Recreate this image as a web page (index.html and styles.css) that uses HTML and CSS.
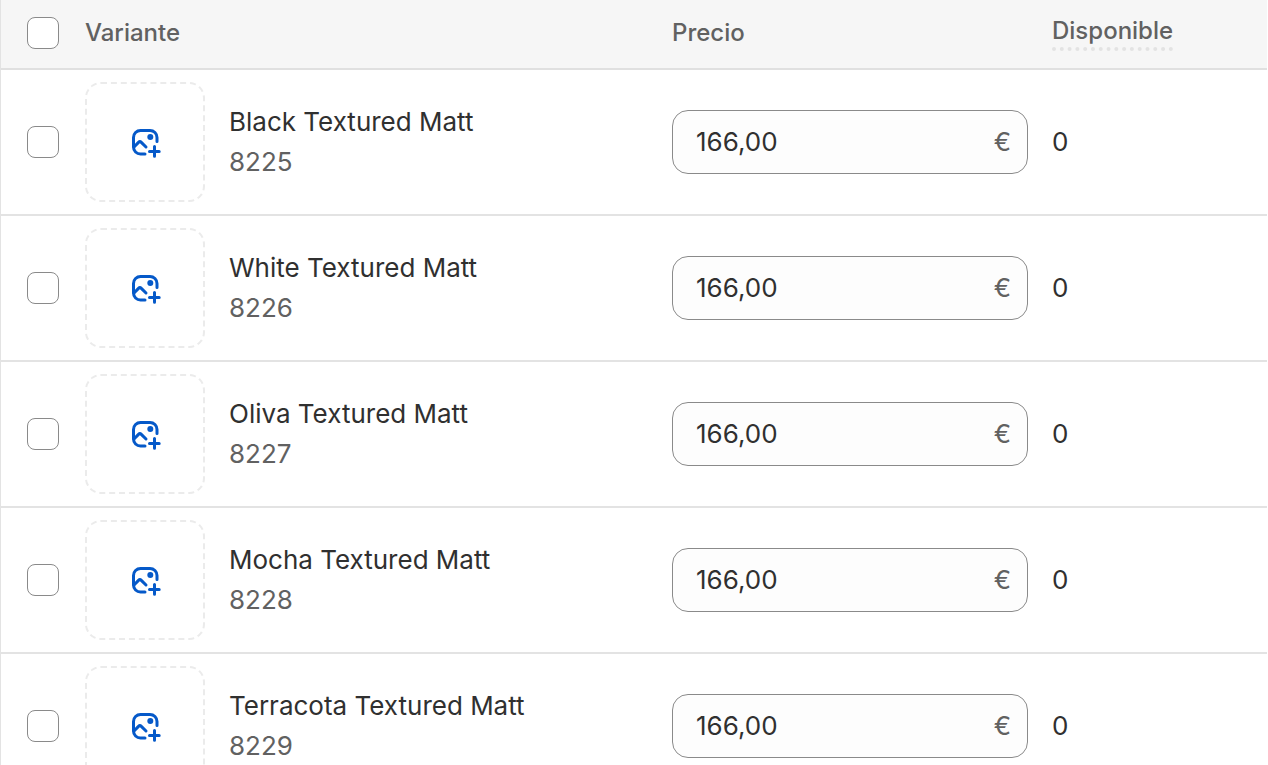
FILE: index.html
```
<!DOCTYPE html>
<html lang="es">
<head>
<meta charset="utf-8">
<title>Variantes</title>
<link rel="stylesheet" href="styles.css">
</head>
<body>
<svg class="sprite" aria-hidden="true">
  <symbol id="image-add" viewBox="-2 -2 32 32">
    <g fill="none" stroke="currentColor" stroke-width="3" stroke-linecap="round" stroke-linejoin="round">
      <path d="M26 13.500V9.500a7 7 0 0 0-7-7H9.500a7 7 0 0 0-7 7V19a7 7 0 0 0 7 7H14"/>
      <path d="M3 19L7.500 14.400Q8.900 13 10.300 14.400L15 19"/>
      <path d="M23.500 18.500V28.200M18.500 23.500H28.200"/>
    </g>
    <circle cx="19.300" cy="9" r="3" fill="currentColor"/>
  </symbol>
</svg>
<main class="panel">
  <table class="variants">
    <colgroup>
      <col class="col-select"><col class="col-variant"><col class="col-price"><col class="col-stock">
    </colgroup>
    <thead>
      <tr>
        <th><input class="check" type="checkbox" aria-label="Seleccionar todo"></th>
        <th scope="col">Variante</th>
        <th scope="col">Precio</th>
        <th scope="col"><span class="hint">Disponible</span></th>
      </tr>
    </thead>
    <tbody>
      <tr>
        <td><input class="check" type="checkbox" aria-labelledby="v1"></td>
        <td><div class="variant"><button class="thumb" type="button" aria-label="Añadir imagen"><svg class="icon"><use href="#image-add"/></svg></button><div><div class="name" id="v1">Black Textured Matt</div><div class="sku">8225</div></div></div></td>
        <td><label class="price"><input class="amount" type="text" value="166,00" aria-label="Precio"><span>€</span></label></td>
        <td>0</td>
      </tr>
      <tr>
        <td><input class="check" type="checkbox" aria-labelledby="v2"></td>
        <td><div class="variant"><button class="thumb" type="button" aria-label="Añadir imagen"><svg class="icon"><use href="#image-add"/></svg></button><div><div class="name" id="v2">White Textured Matt</div><div class="sku">8226</div></div></div></td>
        <td><label class="price"><input class="amount" type="text" value="166,00" aria-label="Precio"><span>€</span></label></td>
        <td>0</td>
      </tr>
      <tr>
        <td><input class="check" type="checkbox" aria-labelledby="v3"></td>
        <td><div class="variant"><button class="thumb" type="button" aria-label="Añadir imagen"><svg class="icon"><use href="#image-add"/></svg></button><div><div class="name" id="v3">Oliva Textured Matt</div><div class="sku">8227</div></div></div></td>
        <td><label class="price"><input class="amount" type="text" value="166,00" aria-label="Precio"><span>€</span></label></td>
        <td>0</td>
      </tr>
      <tr>
        <td><input class="check" type="checkbox" aria-labelledby="v4"></td>
        <td><div class="variant"><button class="thumb" type="button" aria-label="Añadir imagen"><svg class="icon"><use href="#image-add"/></svg></button><div><div class="name" id="v4">Mocha Textured Matt</div><div class="sku">8228</div></div></div></td>
        <td><label class="price"><input class="amount" type="text" value="166,00" aria-label="Precio"><span>€</span></label></td>
        <td>0</td>
      </tr>
      <tr>
        <td><input class="check" type="checkbox" aria-labelledby="v5"></td>
        <td><div class="variant"><button class="thumb" type="button" aria-label="Añadir imagen"><svg class="icon"><use href="#image-add"/></svg></button><div><div class="name" id="v5">Terracota Textured Matt</div><div class="sku">8229</div></div></div></td>
        <td><label class="price"><input class="amount" type="text" value="166,00" aria-label="Precio"><span>€</span></label></td>
        <td>0</td>
      </tr>
    </tbody>
  </table>
</main>
</body>
</html>
```
FILE: styles.css
```
* {
  box-sizing: border-box;
}

body {
  margin: 0;
  background: #fff;
  color: #303030;
  font-family: Inter, "Liberation Sans", sans-serif;
  font-size: 26px;
  line-height: 40px;
}

.sprite {
  display: none;
}

.panel {
  height: 100vh;
  overflow: hidden;
  padding-right: 1px;
  border-left: 1px solid #e3e3e3;
}

.variants {
  width: 100%;
  table-layout: fixed;
  border-collapse: separate;
  border-spacing: 0;
}

.col-select {
  width: 84px;
}

.col-price {
  width: 380px;
}

.col-stock {
  width: 215px;
}

.variants th {
  height: 70px;
  padding: 0 0 2px;
  border-bottom: 2px solid #e0e0e0;
  background: #f6f6f6;
  color: #616161;
  font-size: 24px;
  font-weight: 500;
  line-height: 32px;
  text-align: left;
  vertical-align: middle;
}

.variants td {
  padding: 12px 0;
  border-bottom: 2px solid #e3e3e3;
  vertical-align: middle;
}

.check {
  display: block;
  appearance: none;
  width: 32px;
  height: 32px;
  margin: 0 0 0 26px;
  border: 1px solid #8a8a8a;
  border-radius: 8px;
  background: #fff;
}

.check:checked {
  background: #303030;
}

.hint {
  display: inline-block;
  border-bottom: 4px dotted #e3e3e3;
}

.variant {
  display: flex;
  align-items: center;
  gap: 24px;
}

.thumb {
  display: flex;
  flex: none;
  align-items: center;
  justify-content: center;
  width: 120px;
  height: 120px;
  padding: 0;
  border: 2px dashed #ebebeb;
  border-radius: 16px;
  background: #fff;
  color: #0559c9;
}

.icon {
  width: 32px;
  height: 32px;
}

.sku {
  color: #616161;
}

.price {
  display: flex;
  align-items: center;
  width: 356px;
  height: 64px;
  padding: 0 16px 0 23px;
  border: 1px solid #8a8a8a;
  border-radius: 16px;
  background: #fdfdfd;
  color: #616161;
}

.amount {
  flex: 1;
  min-width: 0;
  padding: 0;
  border: 0;
  outline: 0;
  background: transparent;
  color: #303030;
  font: inherit;
}
```
